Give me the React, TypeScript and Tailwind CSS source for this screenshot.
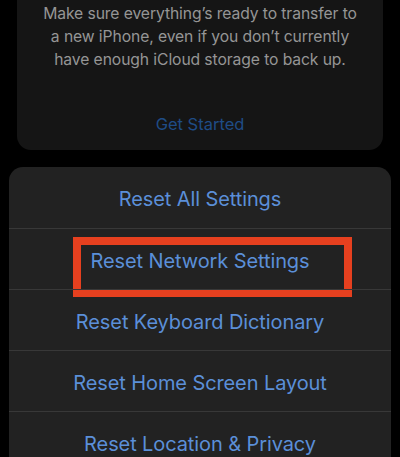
import React from 'react';

const resetOptions = [
  "Reset All Settings",
  "Reset Network Settings",
  "Reset Keyboard Dictionary",
  "Reset Home Screen Layout",
  "Reset Location & Privacy",
];

export default function App() {
  return (
    <div className="w-[400px] h-[457px] overflow-hidden bg-black font-['Inter',sans-serif]">
      {/* tarjeta de transferencia */}
      <div className="mx-[17px] w-[366px] h-[150px] bg-[#151515] rounded-b-[14px] flex flex-col items-center">
        <p className="pt-[2px] text-center text-[15.7px] leading-[23px] text-[#959595] tracking-[-0.1px]">
          Make sure everything’s ready to transfer to<br />
          a new iPhone, even if you don’t currently<br />
          have enough iCloud storage to back up.
        </p>
        <span className="mt-[41px] text-[16.5px] text-[#1f4c86]">Get Started</span>
      </div>

      {/* opciones de reset */}
      <div className="mt-[17px] mx-[9px] bg-[#222222] rounded-t-[14px]">
        {resetOptions.map((label, i) => (
          <div
            key={label}
            className={
              "h-[61px] pt-[3px] flex items-center justify-center relative " +
              (i > 0 ? "border-t border-[#383838]" : "")
            }
          >
            <span className="text-[20px] text-[#5b8fd8] tracking-[-0.1px]">{label}</span>
            {i === 1 && (
              <div className="absolute left-[64px] top-[8px] w-[279px] h-[60px] border-[8px] border-[#e6401f]" />
            )}
          </div>
        ))}
      </div>
    </div>
  );
}
